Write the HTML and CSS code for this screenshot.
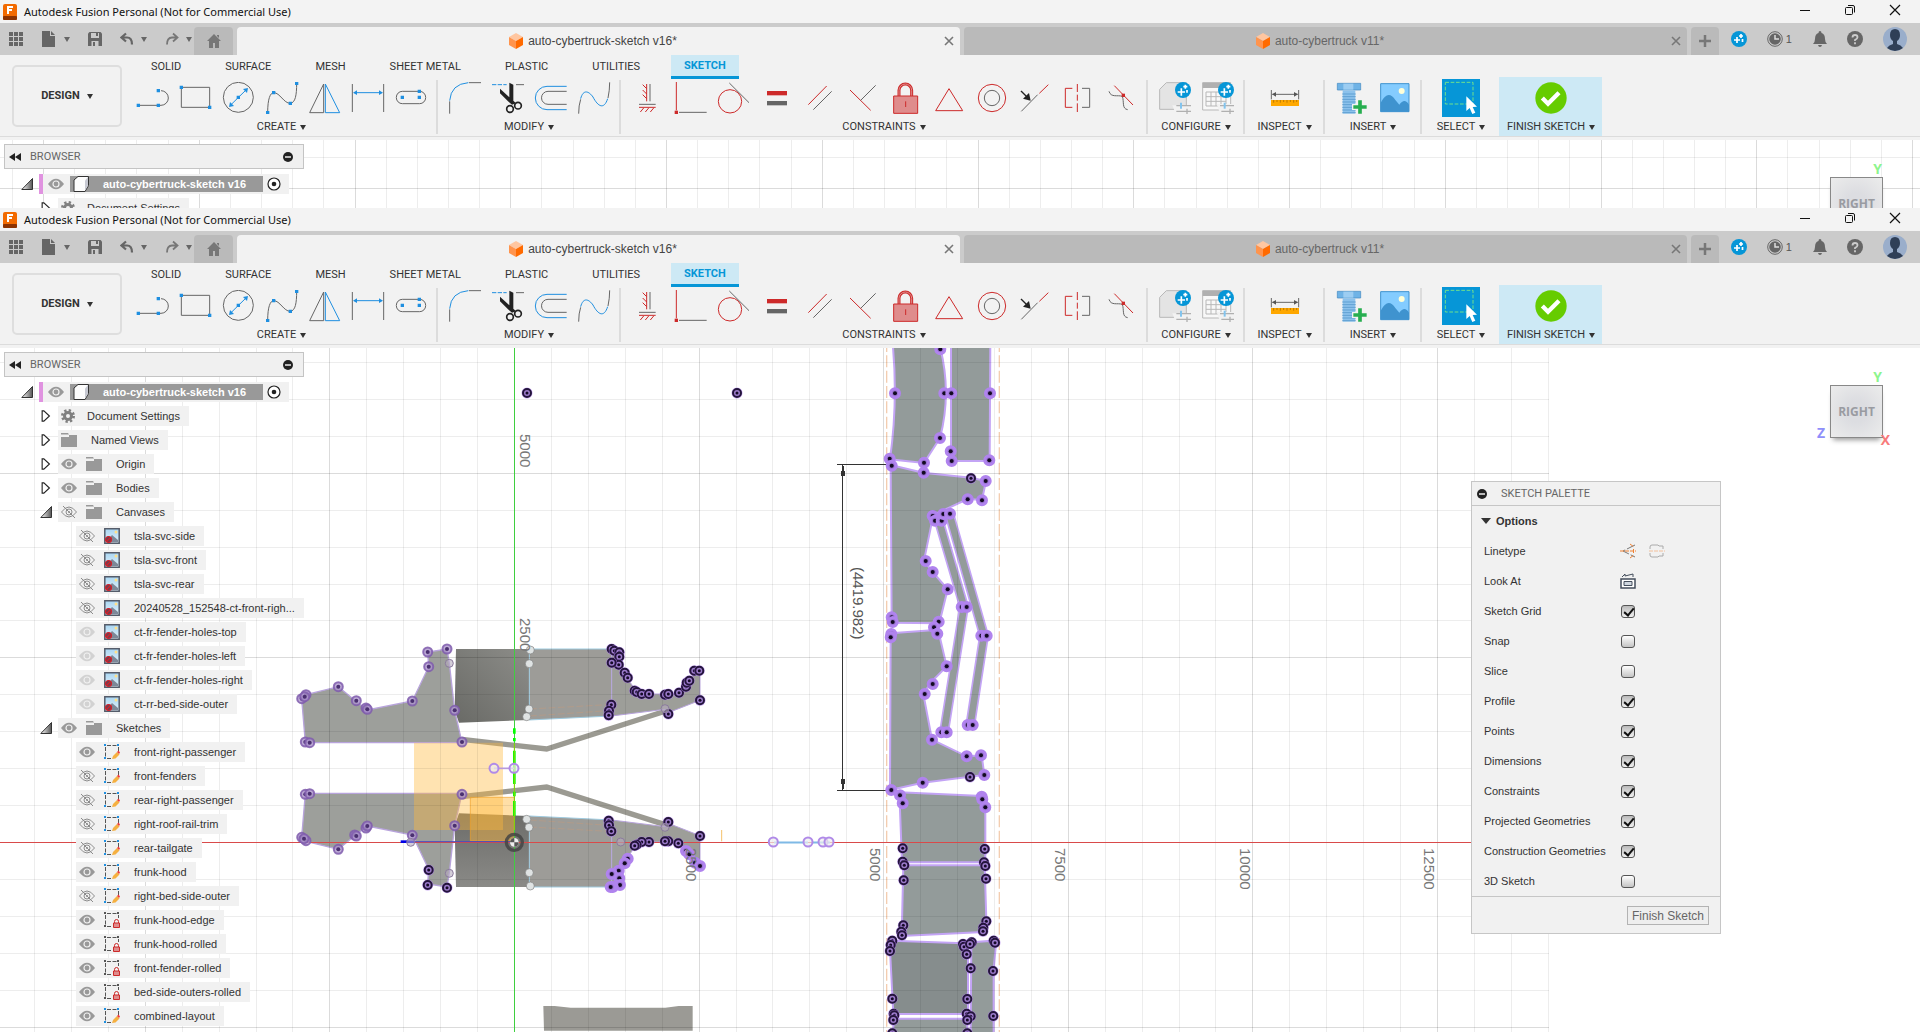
FILE: index.html
```html
<!DOCTYPE html>
<html lang="en">
<head>
<meta charset="utf-8">
<title>Autodesk Fusion Personal (Not for Commercial Use)</title>
<link rel="stylesheet" href="styles.css">
</head>
<body>
<svg class="sprite" aria-hidden="true">
  <defs>
    <linearGradient id="g-twist" x1="0" y1="0" x2="1" y2="0"><stop offset="0" stop-color="#fff"/><stop offset="1" stop-color="#555"/></linearGradient>
    <linearGradient id="g-dark" x1="1" y1="0" x2="0" y2="1"><stop offset="0" stop-color="#8d8d89"/><stop offset="1" stop-color="#696a66"/></linearGradient>
    <linearGradient id="g-dark2" x1="0" y1="0" x2="0" y2="1"><stop offset="0" stop-color="#8a8a87"/><stop offset="1" stop-color="#6c6c69"/></linearGradient>
    <linearGradient id="g-sky" x1="0" y1="0" x2="0" y2="1"><stop offset="0" stop-color="#a9d6f3"/><stop offset="1" stop-color="#e4f2fa"/></linearGradient>
  </defs>
  <symbol id="app" viewBox="0 0 14 16"><rect width="14" height="16" rx="2" fill="#f26a00"/><rect y="12" width="14" height="4" rx="1" fill="#8c3200"/><path d="M5 10V3h5M5 6h4" stroke="#fff" stroke-width="2" fill="none"/></symbol>
  <symbol id="min" viewBox="0 0 12 12"><path d="M1 6.500h10" stroke="#111"/></symbol>
  <symbol id="restore" viewBox="0 0 12 12"><path d="M1.500 4.500a1 1 0 0 1 1-1h5a1 1 0 0 1 1 1v5a1 1 0 0 1-1 1h-5a1 1 0 0 1-1-1zM4 1.500h5a1.500 1.500 0 0 1 1.500 1.500v5.500" stroke="#111" fill="none"/></symbol>
  <symbol id="close" viewBox="0 0 12 12"><path d="M1 1l10 10M11 1L1 11" stroke="#111" stroke-width="1.200"/></symbol>
  <symbol id="x" viewBox="0 0 10 10"><path d="M1 1l8 8M9 1L1 9" stroke="#777" stroke-width="1.600"/></symbol>
  <symbol id="grid" viewBox="0 0 14 14"><path d="M0 2h14M0 7h14M0 12h14" stroke="#666" stroke-width="4" stroke-dasharray="4 1"/></symbol>
  <symbol id="file" viewBox="0 0 14 16"><path d="M0 0h8v5h5v11H0zM9 0l4 4H9z" fill="#666"/></symbol>
  <symbol id="save" viewBox="0 0 14 14"><path d="M1.500 0h11L14 1.500V14H0V1.500z" fill="#666"/><path d="M3 1h8v5H3zM3.500 9h7v5h-7z" fill="#cbcbcb"/><path d="M8 1h2v3H8zM5 10h2v4H5z" fill="#666"/></symbol>
  <symbol id="undo" viewBox="0 0 14 13"><path d="M6 1L1.500 5 6 9M2 5h5q5 0 5 7" fill="none" stroke="#666" stroke-width="2.200"/></symbol>
  <symbol id="redo" viewBox="0 0 14 13"><path d="M8 1l4.500 4L8 9M12 5H7q-5 0-5 7" fill="none" stroke="#777" stroke-width="1.800"/></symbol>
  <symbol id="home" viewBox="0 0 14 14"><path d="M7 0l7 7h-2v7H8V9H6v5H2V7H0zM10 1h2v3l-2-2z" fill="#777"/></symbol>
  <symbol id="cube" viewBox="0 0 14 16"><path d="M7 0l7 4-7 4-7-4z" fill="#ffc6a0"/><path d="M0 4l7 4v8l-7-4z" fill="#ff944d"/><path d="M14 4L7 8v8l7-4z" fill="#ff6a00"/></symbol>
  <symbol id="plus" viewBox="0 0 14 14"><path d="M7 1v12M1 7h12" stroke="#777" stroke-width="2.500"/></symbol>
  <symbol id="spark" viewBox="0 0 16 16"><circle cx="8" cy="8" r="8" fill="#0696d7"/><path d="M6 6v6M3 9h6M10 3v4M8 5h4M11.500 8v3" stroke="#fff" stroke-width="1.700"/></symbol>
  <symbol id="clock" viewBox="0 0 16 16"><circle cx="8" cy="8" r="7.300" fill="none" stroke="#666"/><circle cx="8" cy="8" r="5.800" fill="#666"/><path d="M8 4v4h4" stroke="#ddd" stroke-width="1.500" fill="none"/></symbol>
  <symbol id="bell" viewBox="0 0 14 16"><path d="M7 0q1.500 0 1.500 2Q12 3 12 8q0 3 2 5H0q2-2 2-5 0-5 3.500-6Q5.500 0 7 0zM5 14h4q-.5 2-2 2t-2-2z" fill="#666"/></symbol>
  <symbol id="help" viewBox="0 0 16 16"><circle cx="8" cy="8" r="8" fill="#666"/><path d="M5.500 6.500Q5.500 4 8 4t2.500 2.200Q10.500 7.500 8 9v1M8 11.200v2" stroke="#ccc" stroke-width="1.800" fill="none"/></symbol>
  <symbol id="avatar" viewBox="0 0 24 24"><circle cx="12" cy="12" r="12" fill="#9aaecb"/><path d="M4 21q2-3 6-4v-3Q7 12 7 8q0-6 5-6t5 6q0 4-3 6v3q4 1 6 4-8 6-16 0z" fill="#2f3f57"/></symbol>

  <symbol id="line" viewBox="0 0 120 96"><path class="k" d="M16 70h60M84 26a22 22 0 0 1 0 44h-8"/><path class="bf" d="M11 65h10v10H11zM71 65h10v10H71zM71 21h10v10H71z"/></symbol>
  <symbol id="rect" viewBox="0 0 120 96"><path class="k" d="M16 16h85v60H16z"/><path class="bf" d="M11 11h10v10H11zM96 71h10v10H96z"/></symbol>
  <symbol id="circle" viewBox="0 0 120 96"><circle class="k" cx="58" cy="46" r="45"/><path class="b" d="M34 70l49-48"/><path class="bf" d="M53 41h10v10H53zM30 75l3-15 12 12zM87 18l-3 15-12-12z"/></symbol>
  <symbol id="spline" viewBox="0 0 120 96"><path class="k" d="M17 92C17 50 25 32 35 32C54 32 65 64 85 64C100 62 104 40 104 4"/><path class="bf" d="M12 87h10v9H12zM30 27h10v10H30zM80 59h10v10H80zM99 0h10v9H99z"/></symbol>
  <symbol id="mirror" viewBox="0 0 120 96"><path class="k" d="M14 92L56 6v86z"/><path class="b" d="M61 6l43 86H61z"/></symbol>
  <symbol id="dim" viewBox="0 0 120 96"><path class="k" d="M13 6v84M107 6v84"/><path class="b" d="M20 32h80"/><path class="bf" d="M15 32l12-7v14zM105 32l-12-7v14z"/></symbol>
  <symbol id="slot" viewBox="0 0 120 96"><rect class="k" x="16" y="28" width="88" height="37" rx="18"/><path class="bf" d="M29 41h10v10H29zM80 23h10v10H80zM80 41h10v10H80z"/></symbol>
  <symbol id="fillet" viewBox="0 0 120 96"><path class="k" d="M14 58v37M72 2h36"/><path class="b" d="M14 56Q18 6 70 2"/></symbol>
  <symbol id="trim" viewBox="0 0 120 96"><path class="b" stroke-dasharray="13 4" d="M12 8h44"/><path class="k" d="M84 8h24"/><path fill="#222" d="M36 20l28 26V2l12 6v48l8 8-12 4L60 58 36 34z"/><circle cx="66" cy="81" r="10" fill="none" stroke="#222" stroke-width="5"/><circle cx="90" cy="71" r="10" fill="none" stroke="#222" stroke-width="5"/></symbol>
  <symbol id="offset" viewBox="0 0 120 96"><path class="b" d="M107 13H48a35 35 0 0 0 0 70h59"/><path class="k" d="M107 28H51a19 19 0 0 0 0 39h56"/></symbol>
  <symbol id="blend" viewBox="0 0 120 96"><path class="k" d="M14 95Q14 70 20 52M102 48Q107 25 107 1"/><path class="b" d="M20 50C28 20 45 28 57 45C72 74 90 84 101 50"/></symbol>
  <symbol id="hv" viewBox="0 0 120 96"><path class="r" d="M56 6v52M56 20L44 8M56 36L44 24M56 50L44 38M33 76h50M37 90l10-12M52 90l10-12M67 90l10-12"/><path class="k" d="M66 6v52M33 67h50"/></symbol>
  <symbol id="coin" viewBox="0 0 120 96"><path class="r" d="M16 0v85"/><path class="k" d="M24 91h83"/><path class="rf" d="M11 86h10v10H11z"/></symbol>
  <symbol id="tangent" viewBox="0 0 120 96"><circle class="r" cx="48" cy="58" r="35"/><path class="k" d="M46 3l59 59"/></symbol>
  <symbol id="equal" viewBox="0 0 120 96"><path class="rf" d="M30 27h60v13H30z"/><path fill="#666" d="M30 57h60v13H30z"/></symbol>
  <symbol id="parallel" viewBox="0 0 120 96"><path class="r" d="M25 68l55-56"/><path class="k" d="M40 83l55-55"/></symbol>
  <symbol id="perp" viewBox="0 0 120 96"><path class="r" d="M21 24l62 61"/><path class="k" d="M53 55l45-45"/></symbol>
  <symbol id="lock" viewBox="0 0 120 96"><path d="M39 42V25a19 19 0 0 1 38 0v17" fill="none" stroke="#cd2a2a" stroke-width="9"/><path d="M39 42V25a19 19 0 0 1 38 0v17" fill="none" stroke="#df8c8c" stroke-width="3"/><path fill="#df8c8c" stroke="#cd2a2a" stroke-width="3" d="M23 42h72v52H23z"/><path class="r" d="M59 58v17"/></symbol>
  <symbol id="fix" viewBox="0 0 120 96"><path class="r" d="M60 20L20 86h81z"/></symbol>
  <symbol id="conc" viewBox="0 0 120 96"><circle class="r" cx="60" cy="48" r="41"/><circle class="k" cx="60" cy="48" r="23"/></symbol>
  <symbol id="midp" viewBox="0 0 120 96"><path class="k" d="M19 88l49-50"/><path class="r" d="M73 34l27-26"/><path d="M18 27l22 22" stroke="#222" stroke-width="4"/><path fill="#222" d="M47 56L24 50l18-17z"/></symbol>
  <symbol id="symm" viewBox="0 0 120 96"><path class="r" d="M43 19H22v57h21M58 6v24M58 38v18M58 64v26"/><path class="k" d="M72 19h23v57H72"/></symbol>
  <symbol id="curv" viewBox="0 0 120 96"><path class="k" d="M24 28C30 48 50 38 64 43C70 60 62 80 80 83"/><path class="r" d="M40 11l56 58"/><path class="rf" d="M62 35h10v10H62z"/></symbol>
  <symbol id="cfgbox" viewBox="0 0 120 96"><path fill="#e4e4e4" stroke="#b8b8b8" stroke-width="3" d="M14 82V22L34 2h60v80z"/><path d="M52 70h60v20H60z" fill="#f2f2f2"/><path stroke="#b0b0b0" stroke-width="4" d="M64 71h44M64 88h44M96 80v16"/><path stroke="#82c4ee" stroke-width="6" d="M78 62v18"/><circle cx="84" cy="24" r="24" fill="#0696d7"/><path stroke="#fff" stroke-width="5" d="M79 19v22M68 30h22M91 8v12M85 14h12M96 24v8"/></symbol>
  <symbol id="cfgtab" viewBox="0 0 120 96"><path fill="#f8f8f8" stroke="#b8b8b8" stroke-width="3" d="M14 2h84v82H14z"/><path fill="#b0b0b0" d="M14 2h84v16H14z"/><path stroke="#b8b8b8" stroke-width="3" fill="none" d="M24 30h60v42H24zM24 44h60M24 58h60M39 30v42M54 30v42M69 30v42"/><path d="M56 66h56v28H66z" fill="#f2f2f2"/><path stroke="#b0b0b0" stroke-width="4" d="M66 71h42M70 88h38M96 80v16"/><path stroke="#82c4ee" stroke-width="6" d="M80 62v18"/><circle cx="84" cy="24" r="24" fill="#0696d7"/><path stroke="#fff" stroke-width="5" d="M79 19v22M68 30h22M91 8v12M85 14h12M96 24v8"/></symbol>
  <symbol id="measure" viewBox="0 0 120 96"><path class="k" d="M19 24v28M101 24v28M22 37h76"/><path fill="#555" d="M21 37l12-7v14zM99 37l-12-7v14z"/><path fill="#ffa800" d="M18 54h84v18H18z"/><path stroke="#9a6200" stroke-width="2" d="M26 54v8M36 54v6M46 54v8M56 54v6M66 54v8M76 54v6M86 54v8M95 54v6"/></symbol>
  <symbol id="bolt" viewBox="0 0 120 96"><path fill="#6fb3e6" stroke="#3f86bf" stroke-width="2" d="M16 4h70v20H16z"/><path fill="#9ccdf2" d="M34 5h30v18H34z"/><path fill="#8cc2ec" d="M32 25h38v70H32z"/><path stroke="#5f9fd2" stroke-width="3" d="M31 36h40M31 44h40M31 52h40M31 60h40M31 68h40M31 76h40M31 84h40M31 92h40"/><path stroke="#f2f2f2" stroke-width="18" d="M84 52v44M60 75h48"/><path stroke="#27ae50" stroke-width="11" d="M84 55v40M64 75h40"/></symbol>
  <symbol id="image" viewBox="0 0 120 96"><path fill="#84ccff" stroke="#3f93cf" stroke-width="3" d="M17 5h85v84H17z"/><path fill="#3f93cf" d="M17 62q22-42 44-8l12 14q16-22 29 0v21H17z"/><circle cx="80" cy="27" r="9" fill="#ffffd8"/></symbol>
  <symbol id="select" viewBox="0 0 114 114"><path fill="#0696d7" d="M0 0h114v114H0z"/><path fill="none" stroke="#6fe08c" stroke-width="3" stroke-dasharray="11 5" d="M10 10h83v65H10z"/><path fill="#fff" d="M73 52v44l10-9 8 18 9-4-8-17 13-1z"/></symbol>
  <symbol id="check" viewBox="0 0 96 96"><circle cx="48" cy="48" r="47" fill="#66cc00"/><path d="M22 48l17 17 33-33" fill="none" stroke="#fff" stroke-width="13"/></symbol>

  <symbol id="rew" viewBox="0 0 12 8"><path d="M0 4l6-4v8zM6 4l6-4v8z" fill="#222"/></symbol>
  <symbol id="minus" viewBox="0 0 10 10"><circle cx="5" cy="5" r="5" fill="#222"/><path d="M2 5h6" stroke="#eee" stroke-width="1.500"/></symbol>
  <symbol id="open" viewBox="0 0 12 12"><path d="M11.500 .5v11H.8z" fill="url(#g-twist)" stroke="#333"/></symbol>
  <symbol id="shut" viewBox="0 0 12 14"><path d="M1.500 1h2L10 7l-6.500 6h-2z" fill="#fff" stroke="#222" stroke-width="1.300"/></symbol>
  <symbol id="eye" viewBox="0 0 16 12"><path d="M0 6Q8-4.500 16 6 8 16.500 0 6z" fill="#999"/><circle cx="8" cy="6" r="3" fill="#999" stroke="#f0f0f0" stroke-width="1.200"/></symbol>
  <symbol id="noeye" viewBox="0 0 16 14"><path d="M.5 7Q8-3 15.500 7 8 17 .5 7zM2 1l12 12" fill="none" stroke="#8c8c8c"/><circle cx="8" cy="7" r="3" fill="none" stroke="#8c8c8c"/><circle cx="8" cy="7" r="1" fill="#8c8c8c"/></symbol>
  <symbol id="box" viewBox="0 0 16 16"><path d="M1 4l4-3.500h10.500v9L12 15.500H1z" fill="#fdfdfd" stroke="#333"/><path d="M12 4.500L15 1v8.500l-3 5z" fill="#c7c9d2"/></symbol>
  <symbol id="target" viewBox="0 0 14 14"><circle cx="7" cy="7" r="6" fill="#fff" stroke="#222" stroke-width="1.200"/><circle cx="7" cy="7" r="2.300" fill="#222"/></symbol>
  <symbol id="gear" viewBox="0 0 14 14"><circle cx="7" cy="7" r="5.500" fill="none" stroke="#808080" stroke-width="3" stroke-dasharray="2.200 2.120"/><circle cx="7" cy="7" r="3.500" fill="none" stroke="#808080" stroke-width="3"/></symbol>
  <symbol id="folder" viewBox="0 0 16 14"><path d="M0 4h8V2h8v12H0zM0 0h7l1 1.500H0z" fill="#999"/></symbol>
  <symbol id="canvas" viewBox="0 0 16 16"><path d="M.8.800h14.400v14.400H.8z" fill="url(#g-sky)" stroke="#555c6a" stroke-width="1.500"/><path d="M2 14l6-7 6 5v2z" fill="#7e8898"/><circle cx="12" cy="4" r="1.500" fill="#ffe08a"/><circle cx="4.500" cy="11.500" r="3" fill="#6d4150" stroke="#d3202b" stroke-width="1.200"/><path d="M2.500 13.500l4-4" stroke="#d3202b" stroke-width="1.200"/></symbol>
  <symbol id="sketch" viewBox="0 0 16 16"><path d="M3 1.500h10M1.500 3v10M3 14.500h5M14.500 3v4" stroke="#555" stroke-dasharray="4 1.500"/><path fill="#1f8fe0" d="M0 0h2v2H0zM13 0h2v2h-2zM0 13h2v2H0z"/><path d="M8 15l1-3 4-4 2.500 2.500-4 4z" fill="#f5b041"/><path d="M13 8l1.500-1.500L16 8.500l-1 1.500z" fill="#ee3b3b"/></symbol>
  <symbol id="sklock" viewBox="0 0 16 16"><path d="M3 1.500h10M1.500 3v10M3 14.500h5M14.500 3v3" stroke="#555" stroke-dasharray="4 1.500"/><path fill="#555" d="M0 0h2v2H0zM13 0h2v2h-2zM0 13h2v2H0z"/><path d="M9.500 11h6v4.500h-6z" fill="#df8c8c" stroke="#cd2a2a"/><path d="M10.500 11V9.500a2 2 0 0 1 4 0V11" fill="none" stroke="#cd2a2a"/></symbol>
  <symbol id="lt1" viewBox="0 0 16 14"><path d="M15 1L3 7l12 6" fill="none" stroke="#777" stroke-dasharray="9 2"/><path d="M0 7h16M13.500 5v4M10 0l4 3M10 14l4-3" stroke="#f08030" stroke-dasharray="4 1"/></symbol>
  <symbol id="lt2" viewBox="0 0 16 14"><path d="M1 5V3q0-2 2-2h6l1 1h4v3M1 9v2q0 2 2 2h6l1-1h4V9" fill="none" stroke="#aaa"/><path d="M0 7h16" stroke="#f3c09b" stroke-dasharray="4 1"/></symbol>
  <symbol id="look" viewBox="0 0 16 16"><path d="M1 6h14v9H1z" fill="#fff" stroke="#444e5c" stroke-width="1.500"/><path d="M4 8.500h8v4H4z" fill="#cfd6df" stroke="#444e5c"/><path d="M2 4l3-3v2l4-1 4-1v3" fill="none" stroke="#444e5c"/></symbol>
</svg>

<template id="chrome">
  <header class="titlebar">
    <svg class="appicon"><use href="#app"/></svg>
    <span class="title">Autodesk Fusion Personal (Not for Commercial Use)</span>
    <div class="winbtns">
      <button aria-label="Minimize"><svg><use href="#min"/></svg></button>
      <button aria-label="Restore"><svg><use href="#restore"/></svg></button>
      <button aria-label="Close"><svg><use href="#close"/></svg></button>
    </div>
  </header>
  <div class="tabstrip">
    <div class="quick">
      <button aria-label="Data panel"><svg class="s14"><use href="#grid"/></svg></button>
      <button class="drop" aria-label="File"><svg class="s16"><use href="#file"/></svg><i class="caret"></i></button>
      <button aria-label="Save"><svg class="s14"><use href="#save"/></svg></button>
      <button class="drop" aria-label="Undo"><svg class="s14"><use href="#undo"/></svg><i class="caret"></i></button>
      <button class="drop" aria-label="Redo"><svg class="s14"><use href="#redo"/></svg><i class="caret"></i></button>
    </div>
    <button class="hometab" aria-label="Home"><svg class="s14"><use href="#home"/></svg></button>
    <div class="doctab on"><svg class="s16"><use href="#cube"/></svg><span>auto-cybertruck-sketch v16*</span><button class="tabx" aria-label="Close tab"><svg><use href="#x"/></svg></button></div>
    <div class="doctab"><svg class="s16"><use href="#cube"/></svg><span>auto-cybertruck v11*</span><button class="tabx" aria-label="Close tab"><svg><use href="#x"/></svg></button></div>
    <button class="addtab" aria-label="New tab"><svg class="s14"><use href="#plus"/></svg></button>
    <div class="status">
      <button aria-label="Assistant"><svg class="s16"><use href="#spark"/></svg></button>
      <button class="jobs"><svg class="s16"><use href="#clock"/></svg>1</button>
      <button aria-label="Notifications"><svg class="s16"><use href="#bell"/></svg></button>
      <button aria-label="Help"><svg class="s16"><use href="#help"/></svg></button>
      <button aria-label="Account"><svg class="s24"><use href="#avatar"/></svg></button>
    </div>
  </div>
  <div class="ribbon">
    <button class="design">DESIGN<i class="caret"></i></button>
    <div class="ribbonbody">
      <nav class="modes">
        <button>SOLID</button><button>SURFACE</button><button>MESH</button><button>SHEET METAL</button><button>PLASTIC</button><button>UTILITIES</button><button class="on">SKETCH</button>
      </nav>
      <div class="groups"></div>
    </div>
  </div>
</template>

<section class="window short" data-chrome>
  <main class="workspace"><svg class="scene"><g class="gridlines"></g></svg>
    <div class="browser">
      <div class="browserhead"><svg class="rew"><use href="#rew"/></svg><span>BROWSER</span><svg class="s10"><use href="#minus"/></svg></div>
      <ul class="tree"></ul>
    </div>
    <div class="viewcube"><b class="ay">Y</b><b class="face">RIGHT</b></div>
  </main>
</section>

<section class="window full" data-chrome>
  <main class="workspace">
    <svg class="scene">
      <g transform="translate(0 -348)">
        <g transform="translate(280 620) scale(.33333)">
          <path class="body" d="M790 1158h34l48 5h284l40-5h42v74H792z"/>
          <g id="car"></g>
          <path d="M402 368h267v262H402z" fill="#ffb93c" fill-opacity=".4"/>
          <path d="M571 532h132v130H571z" fill="#ffb93c" fill-opacity=".45" stroke="#f0a32a" stroke-width="2"/>
          <path d="M1325 630v34" stroke="#f5c16a" stroke-width="3"/>
        </g>
        <g transform="translate(780 340) scale(.33333)">
          <g class="sheet">
            <path d="M337 0Q355 180 330 358L432 369 480 294Q515 160 481 24V0z"/>
            <path d="M513 0V363H629L631 0z"/>
            <path d="M332 375L430 398 573 413 618 423 606 480 563 477 460 525 432 662 458 696 503 748 478 850 335 848z"/>
            <path d="M332 880L465 870 478 885 500 979 455 1025 430 1062 456 1199 560 1249 605 1246 613 1305 428 1328 330 1350z"/>
            <path d="M358 1357L606 1368 616 1400V1567H366z"/>
            <path d="M370 1576H614L619 1740 610 1776 365 1788z"/>
            <path fill="#868d8d" d="M335 1802L550 1810 564 1840V2022H340L330 1830z"/>
            <path d="M574 1807L642 1802 648 1810 641 1890V2090H572z"/>
            <path d="M340 2036H562V2090H340z"/>
          </g>
          <g fill="none" stroke-linejoin="round"><path d="M476 540L552 800 492 1177M508 522L612 887 571 1155" stroke="#c3a4f5" stroke-width="30"/><path d="M476 540L552 800 492 1177M508 522L612 887 571 1155" stroke="#939b9a" stroke-width="20"/></g>
          <path d="M320 0V2090M658 0V2090" stroke="#f3cdb0" stroke-width="4" stroke-dasharray="36 10"/>
        </g>
      </g>
      <g class="gridlines"></g>
      <g transform="translate(0 -348)">
        <path d="M0 842.500H1548" stroke="#d94a4a"/>
        <path d="M514.500 348V1032" stroke="#3fcf3f"/>
        <g transform="translate(280 620) scale(.33333)">
          <path d="M362 665h41" stroke="#0000e6" stroke-width="8"/><path d="M403 665h300" stroke="#4a4ac0" stroke-width="3"/>
          <path d="M703 325v16M703 354v10M703 392v100M703 515v14M703 543v45" stroke="#00ff00" stroke-width="8"/><path d="M703 370v260" stroke="#8fd400" stroke-width="3"/>
          <path d="M642 445h60" stroke="#b79add" stroke-width="5"/>
          <circle cx="703" cy="667" r="24" fill="none" stroke="#444" stroke-width="10" stroke-opacity=".85"/>
          <circle cx="703" cy="667" r="13" fill="#eee"/><path d="M703 654v13h13a13 13 0 0 1-13 13v-13h-13a13 13 0 0 1 13-13" fill="#555"/>
        </g>
        <path d="M842.500 464v326M837 464.500h51M837 790.500h51" stroke="#333" fill="none"/><path d="M841 471h4v5h-4zM841 779h4v5h-4zM842 466h2v8h-2zM842 781h2v8h-2z" fill="#333"/>
        <path d="M774 842.500h34M812 842.500h18" stroke="#7fb9e6" stroke-width="2"/>
        <g id="points"></g>
        <g class="scale">
          <text transform="translate(520 434) rotate(90)">5000</text><text transform="translate(520 618) rotate(90)">2500</text>
          <text transform="translate(686 848) rotate(90)">2500</text><text transform="translate(870 848) rotate(90)">5000</text>
          <text transform="translate(1055 848) rotate(90)">7500</text><text transform="translate(1240 848) rotate(90)">10000</text><text transform="translate(1424 848) rotate(90)">12500</text>
          <text class="dimtext" transform="translate(853 567) rotate(90)">(4419.982)</text>
        </g>
      </g>
    </svg>
    <div class="browser">
      <div class="browserhead"><svg class="rew"><use href="#rew"/></svg><span>BROWSER</span><svg class="s10"><use href="#minus"/></svg></div>
      <ul class="tree"></ul>
    </div>
    <div class="viewcube"><b class="ay">Y</b><b class="face">RIGHT</b><b class="az">Z</b><b class="ax">X</b></div>
    <aside class="palette">
      <h2><svg class="s10"><use href="#minus"/></svg>SKETCH PALETTE</h2>
      <h3><i class="caret"></i>Options</h3>
      <div class="opt"><span>Linetype</span><button aria-label="Construction"><svg class="s16"><use href="#lt1"/></svg></button><button aria-label="Centerline"><svg class="s16"><use href="#lt2"/></svg></button></div>
      <div class="opt"><span>Look At</span><button aria-label="Look At"><svg class="s16"><use href="#look"/></svg></button></div>
      <label class="opt"><span>Sketch Grid</span><input type="checkbox" checked></label>
      <label class="opt"><span>Snap</span><input type="checkbox"></label>
      <label class="opt"><span>Slice</span><input type="checkbox"></label>
      <label class="opt"><span>Profile</span><input type="checkbox" checked></label>
      <label class="opt"><span>Points</span><input type="checkbox" checked></label>
      <label class="opt"><span>Dimensions</span><input type="checkbox" checked></label>
      <label class="opt"><span>Constraints</span><input type="checkbox" checked></label>
      <label class="opt"><span>Projected Geometries</span><input type="checkbox" checked></label>
      <label class="opt"><span>Construction Geometries</span><input type="checkbox" checked></label>
      <label class="opt"><span>3D Sketch</span><input type="checkbox"></label>
      <footer><button class="finish">Finish Sketch</button></footer>
    </aside>
  </main>
</section>
<script src="app.js"></script>
</body>
</html>
```
FILE: styles.css
```css
* { box-sizing: border-box; }
body { margin: 0; height: 100vh; display: flex; flex-direction: column; overflow: hidden; background: #fff; color: #333; font: 11px/16px "Liberation Sans", Arial, sans-serif; }
button { border: 0; margin: 0; padding: 0; background: none; font: inherit; color: inherit; display: inline-flex; align-items: center; justify-content: center; }
svg { display: block; flex: none; }
.sprite { position: absolute; width: 0; height: 0; }
.s10 { width: 10px; height: 10px; }
.s14 { width: 14px; height: 14px; }
.s16 { width: 16px; height: 16px; }
.s24 { width: 24px; height: 24px; }
.k { fill: none; stroke: #666; stroke-width: 3px; }
.b { fill: none; stroke: #1f8fe0; stroke-width: 3px; }
.r { fill: none; stroke: #cd2a2a; stroke-width: 3px; }
.bf { fill: #1f8fe0; }
.rf { fill: #cd2a2a; }
.caret { width: 0; height: 0; border: 3px solid transparent; border-top: 5px solid #333; border-bottom: 0; }

.window { display: flex; flex-direction: column; overflow: hidden; }
.short { flex: none; }
.short .workspace { flex: none; height: 68px; }
.full { flex: 1; min-height: 0; }
.full .workspace { flex: 1; min-height: 0; }

.titlebar { height: 23px; flex: none; display: flex; align-items: center; padding: 0 3px; gap: 7px; background: #f3f3f3; color: #111; font-family: "Noto Sans", sans-serif; }
.appicon { width: 14px; height: 16px; }
.title { flex: 1; }
.winbtns { display: flex; padding-bottom: 3px; }
.winbtns button { width: 45px; height: 20px; }
.winbtns svg { width: 12px; height: 12px; }

.tabstrip { height: 32px; flex: none; display: flex; align-items: flex-end; gap: 4px; background: #cbcbcb; }
.quick { width: 190px; height: 32px; display: flex; align-items: center; padding-left: 9px; gap: 18px; }
.quick .drop { gap: 7px; }
.quick .caret { border-top-color: #666; }
.hometab, .doctab, .addtab { height: 28px; background: #bababa; border-radius: 4px 4px 0 0; }
.hometab { width: 39px; }
.doctab { flex: 1; display: flex; align-items: center; justify-content: center; gap: 4px; padding-left: 14px; font-size: 12px; color: #666; }
.doctab span { flex: none; }
.doctab svg { margin-left: auto; }
.doctab.on { background: #f2f2f2; color: #444; }
.doctab .tabx { width: 22px; height: 28px; margin-left: auto; }
.tabx svg { width: 10px; height: 10px; margin: 0; }
.addtab { width: 28px; }
.status { width: 197px; height: 32px; display: flex; align-items: center; justify-content: space-between; padding: 0 13px 0 8px; color: #555; }
.jobs { gap: 3px; }

.ribbon { flex: none; height: 85px; display: flex; background: #f2f2f2; box-shadow: inset 0 -3px #f2f2f2, inset 0 -4px #dcdcdc; font-family: Roboto, sans-serif; color: #333; }
.design { width: 110px; height: 62px; margin: 10px 4px 0 12px; border: 2px solid #dedede; border-radius: 5px; gap: 7px; font-weight: 700; }
.ribbonbody { flex: 1; min-width: 0; }
.modes { display: flex; gap: 18px; height: 24px; padding-left: 12px; }
.modes button { padding: 0 13px; height: 24px; }
.modes .on { background: #cde9f5; color: #0696d7; font-weight: 700; border-bottom: 3px solid #0696d7; }
.groups { display: flex; height: 57px; }
.group { position: relative; display: flex; flex-direction: column; align-items: center; padding: 2px 4px 0 5px; border-right: 2px solid #dcdcdc; border-image: linear-gradient(#f2f2f2 2px, #dcdcdc 2px, #dcdcdc 54px, #f2f2f2 54px) 1; }
.group div { display: flex; height: 34px; align-items: center; }
.group svg { width: 40px; height: 32px; }
.group button { width: 43px; }
.group .label { width: auto; gap: 4px; height: 16px; margin-top: 4px; white-space: nowrap; }
.inspect { width: 80px; }
.insert { width: 97px; }
.select { width: 77px; border: 0; }
.select div svg { width: 38px; height: 38px; }
.done { width: 103px; height: 59px; margin-top: -2px; padding-top: 4px; background: #cde9f5; border: 0; }

.workspace { position: relative; overflow: hidden; background: #fff; }
.scene { position: absolute; inset: 0; width: 100%; height: 100%; }
.scale text { font: 15px "Liberation Sans", Arial, sans-serif; fill: #777; }
.scale .dimtext { fill: #555; }
.body { fill: #9b9a95; }
.sheet { fill: #939b9a; stroke: #c3a4f5; stroke-width: 6px; }

.browser { position: relative; width: 300px; margin: 4px 0 0 4px; }
.browserhead { height: 25px; display: flex; align-items: center; gap: 9px; padding: 0 10px 0 4px; background: #f0f0f0; border: 1px solid #c4c4c4; color: #666; font-family: Roboto, sans-serif; }
.browserhead span { flex: 1; }
.rew { width: 12px; height: 8px; }
.tree { list-style: none; margin: 0; padding: 5px 0 0; display: flex; flex-direction: column; gap: 4px; }
.tree li { display: flex; align-items: center; height: 20px; }
.tree .tw { width: 12px; height: 12px; margin-right: 6px; }
.tree .item { display: flex; align-items: center; height: 20px; padding: 0 9px 0 3px; background: #f1f1f1; white-space: nowrap; }
.l0 { padding-left: 17px; }
.l1 { padding-left: 36px; }
.l2 { padding-left: 72px; }
.ico { width: 16px; height: 16px; }
.eye { width: 16px; height: 14px; margin-right: 9px; }
.dim { opacity: .35; }
.l1 .ico, .l2 .ico { margin-right: 14px; }
.item .geari { width: 14px; height: 14px; margin-right: 12px; }
.tree .root { margin: 0; padding: 0 8px 0 5px; border-left: 4px solid #e093e0; gap: 4px; }
.root .eye { margin-right: 2px; }
.name { display: flex; align-items: center; gap: 14px; height: 16px; padding: 0 17px 0 3px; background: #999; color: #fff; font-weight: 700; }

.viewcube { position: absolute; right: 37px; top: 37px; width: 53px; height: 53px; display: flex; align-items: center; justify-content: center; background: radial-gradient(#dcdde1 30%, #ececec); border: 1px solid #888; box-shadow: 0 5px 5px -3px #999; font: 14px/16px "Open Sans", sans-serif; }
.viewcube b { font-weight: 700; }
.face { font-size: 12px; color: #999ba1; }
.ay, .az, .ax { position: absolute; }
.ay { top: -17px; right: 0; color: #8df58d; }
.az { bottom: -4px; left: -14px; color: #8f8ffa; }
.ax { bottom: -11px; right: -8px; color: #f87a7a; }

.palette { position: absolute; right: 199px; top: 133px; width: 250px; background: #f1f1f1; border: 1px solid #c6c6c6; }
.palette h2 { display: flex; align-items: center; gap: 14px; height: 24px; margin: 0; padding-left: 5px; border-bottom: 1px solid #c6c6c6; font: 11px/16px Roboto, sans-serif; color: #666; }
.palette h3 { display: flex; align-items: center; gap: 5px; height: 30px; margin: 0; padding-left: 9px; font-size: 11px; }
.palette h3 .caret { border-width: 6px 5px 0; }
.opt { display: flex; align-items: center; height: 30px; padding-left: 12px; }
.opt span { width: 136px; }
.opt button { margin-right: 13px; }
.opt input { appearance: none; position: relative; width: 14px; height: 13px; margin: 0 1px; border: 1px solid #555; border-radius: 3px; background: linear-gradient(#fff, #c4c4c4); }
.opt input:checked { background: linear-gradient(#bbb, #f0f0f0); }
.opt input:checked::before { content: ""; position: absolute; left: 4px; top: 0; width: 4px; height: 8px; border: solid #111; border-width: 0 2px 2px 0; transform: rotate(40deg); }
.palette footer { display: flex; justify-content: flex-end; padding: 9px 11px 8px; border-top: 1px solid #c6c6c6; }
.finish { height: 19px; padding: 0 4px; border: 1px solid #b3b3b3; background: #eee; color: #666; font-size: 12px; }
```
FILE: app.js
```js
const icon = (id, cls = '') => `<svg class="${cls}"><use href="#${id}"/></svg>`;

const groups = [
  ['CREATE', '', 'line rect circle spline mirror dim slot'],
  ['MODIFY', '', 'fillet trim offset blend'],
  ['CONSTRAINTS', '', 'hv coin tangent equal parallel perp lock fix conc midp symm curv'],
  ['CONFIGURE', '', 'cfgbox cfgtab'],
  ['INSPECT', 'inspect', 'measure'],
  ['INSERT', 'insert', 'bolt image'],
  ['SELECT', 'select', 'select'],
  ['FINISH SKETCH', 'done', 'check']
];
const ribbon = groups.map(([name, cls, ids]) =>
  `<div class="group ${cls}"><div>${ids.split(' ').map(i => `<button aria-label="${i}">${icon(i)}</button>`).join('')}</div><button class="label">${name}<i class="caret"></i></button></div>`).join('');

for (const w of document.querySelectorAll('[data-chrome]')) {
  const chrome = document.getElementById('chrome').content.cloneNode(true);
  chrome.querySelector('.groups').innerHTML = ribbon;
  w.prepend(chrome);
}

// Browser tree: level, visibility, icon, label
const rows = [
  [1, 'shut', '', 'gear', 'Document Settings'], [1, 'shut', '', 'folder', 'Named Views'],
  [1, 'shut', 'eye', 'folder', 'Origin'], [1, 'shut', 'eye', 'folder', 'Bodies'], [1, 'open', 'noeye', 'folder', 'Canvases'],
  ...['tsla-svc-side', 'tsla-svc-front', 'tsla-svc-rear', '20240528_152548-ct-front-righ...'].map(n => [2, '', 'noeye', 'canvas', n]),
  ...['ct-fr-fender-holes-top', 'ct-fr-fender-holes-left', 'ct-fr-fender-holes-right', 'ct-rr-bed-side-outer'].map(n => [2, '', 'dim', 'canvas', n]),
  [1, 'open', 'eye', 'folder', 'Sketches'],
  [2, '', 'eye', 'sketch', 'front-right-passenger'], [2, '', 'noeye', 'sketch', 'front-fenders'],
  [2, '', 'noeye', 'sketch', 'rear-right-passenger'], [2, '', 'noeye', 'sketch', 'right-roof-rail-trim'],
  [2, '', 'noeye', 'sketch', 'rear-tailgate'], [2, '', 'eye', 'sketch', 'frunk-hood'],
  [2, '', 'noeye', 'sketch', 'right-bed-side-outer'], [2, '', 'eye', 'sklock', 'frunk-hood-edge'],
  [2, '', 'eye', 'sklock', 'frunk-hood-rolled'], [2, '', 'eye', 'sklock', 'front-fender-rolled'],
  [2, '', 'eye', 'sklock', 'bed-side-outers-rolled'], [2, '', 'eye', 'sketch', 'combined-layout']
];
const treeHtml = count => `<li class="l0">${icon('open', 'tw')}<div class="item root">${icon('eye', 'eye')}<span class="name">${icon('box', 'ico')}auto-cybertruck-sketch v16</span>${icon('target', 's14')}</div></li>` +
  rows.slice(0, count).map(([lvl, tw, vis, ic, name]) =>
    `<li class="l${lvl}">${tw ? icon(tw, 'tw') : ''}<div class="item">${vis ? icon(vis === 'dim' ? 'eye' : vis, 'eye ' + (vis === 'dim' ? 'dim' : '')) : ''}${icon(ic, ic === 'gear' ? 'geari' : 'ico')}${name}</div></li>`).join('');
const trees = document.querySelectorAll('.tree');
trees[0].innerHTML = treeHtml(1);
trees[1].innerHTML = treeHtml(rows.length);

// Grid lines
function grid(g, x0, y0, step, maxX, h) {
  let minor = '', major = '';
  for (let i = -30; i < 70; i++) {
    const x = Math.round(x0 + i * step) + 0.5;
    if (x > 0 && x <= maxX) i % 5 ? minor += `M${x} 0V${h}` : major += `M${x} 0V${h}`;
    const y = Math.round(y0 + i * step) + 0.5;
    if (y > 0 && y < h) i % 5 ? minor += `M0 ${y}H${maxX}` : major += `M0 ${y}H${maxX}`;
  }
  g.innerHTML = `<path d="${minor}" stroke="#000" stroke-opacity=".07"/><path d="${major}" stroke="#000" stroke-opacity=".14"/>`;
}
const grids = document.querySelectorAll('.gridlines');
grid(grids[0], 43, 48, 31.15, 1920, 68);
grid(grids[1], 514, 494, 36.92, 1549, 684);

// Truck body, drawn once and mirrored about its centre line
const half = dark => `
  <path d="M546 358L800 387 1155 274" fill="none" stroke="#9b9a92" stroke-width="16"/>
  <path d="M528 87H748V300L537 308 524 271z" fill="url(#${dark})"/>
  <path d="M748 87H995V288L748 300z" fill="#9d9c98" stroke="#9fcbe0" stroke-width="3"/>
  <path d="M750 267L985 254M750 288L985 272" stroke="#c49a7c" stroke-width="1.500" stroke-dasharray="20 8"/>
  <path d="M995 87L1020 100 1018 140 1040 172 1068 212 1085 222H1165L1200 218 1220 195 1245 152H1260V241L1165 278 1155 268 995 288z" fill="#9d9e99" stroke="#b8a4dc" stroke-width="3"/>
  <path d="M65 236L78 224 175 200 226 242 262 270 397 243 446 140 443 96 501 87 508 130 524 271 546 368H76z" fill="#9d9f9b" stroke="#b8a4dc" stroke-width="4"/>`;
document.getElementById('car').innerHTML = half('g-dark') + `<g transform="matrix(1 0 0 -1 0 888)">${half('g-dark2')}</g>`;

// Sketch points. Each set: style, origin x, origin y, coordinates in thirds of a pixel
const styles = {
  lilac: (x, y) => `<circle cx="${x}" cy="${y}" r="4.5" fill="#9a74d2" stroke="#b083ee" stroke-width="3"/><circle cx="${x}" cy="${y}" r="2" fill="#120a20"/>`,
  soft: (x, y) => `<circle cx="${x}" cy="${y}" r="4.5" fill="#ac95cc" fill-opacity=".8" stroke="#7f5cad" stroke-opacity=".85" stroke-width="2"/><circle cx="${x}" cy="${y}" r="2" fill="#4a3070"/>`,
  deep: (x, y) => `<circle cx="${x}" cy="${y}" r="5.500" fill="#b083ee" fill-opacity=".7"/><circle cx="${x}" cy="${y}" r="4" fill="#9c7bcb" stroke="#24143c" stroke-width="2"/><circle cx="${x}" cy="${y}" r="1.500" fill="#160a28"/>`,
  pale: (x, y) => `<circle cx="${x}" cy="${y}" r="4" fill="#dfe3e3" stroke="#777" stroke-opacity=".6"/>`,
  faint: (x, y) => `<circle cx="${x}" cy="${y}" r="4" fill="#b5abbe" fill-opacity=".6" stroke="#8b7b9d"/>`,
  ring: (x, y) => `<circle cx="${x}" cy="${y}" r="4.500" fill="#eee" fill-opacity=".7" stroke="#b08ae8" stroke-width="2"/>`
};
const sets = [
  ['soft', 280, 620, '65,236 78,224 74,230 175,200 229,242 258,264 262,268 397,243 446,140 443,96 501,87 524,271 546,366 76,366 89,368 546,523 76,523 89,521 65,652 78,662 72,656 175,688 224,645 229,648 258,624 262,618 397,646 524,617'],
  ['deep', 280, 620, '446,750 443,795 501,803 995,87 1003,92 1018,97 1018,110 1016,134 995,128 1034,158 1043,173 1064,212 1070,216 1085,222 1107,222 1155,224 1165,222 1197,218 1218,200 1220,188 1228,182 1243,152 1258,152 1260,241 1165,282 994,254 987,272 986,286 986,602 987,616 994,634 1165,606 1260,648 1195,670 1165,664 1155,664 1107,666 1085,666 1070,674 1064,677'],
  ['faint', 280, 620, '508,130 508,760 1155,266 1155,622 1022,666 392,667'],
  ['pale', 280, 620, '751,90 748,131 747,267 740,290 740,598 747,622 748,758 751,798'],
  ['ring', 280, 620, '642,445 702,445'],
  ['lilac', 280, 620, '1043,716 1034,730 1016,752 995,762 1018,775 1020,795 998,801 992,801 1218,693 1228,703 1245,728 1260,738'],
  ['lilac', 780, 340, '481,28 345,160 493,160 514,160 630,160 480,294 512,334 515,363 628,361 329,356 335,377 432,368 431,398 617,423 606,481 563,478 458,528 465,542 485,542 490,522 510,521 437,663 458,696 503,748 545,801 560,801 604,887 620,887 335,832 338,846 334,882 332,892 476,845 462,862 472,881 500,979 458,1032 434,1062 456,1199 484,1177 500,1177 563,1155 578,1155 560,1249 603,1246 613,1305 428,1328 334,1350 360,1366 368,1390 605,1370 607,1378 616,1402'],
  ['deep', 780, 340, '573,415 570,1311 368,1525 614,1527 368,1565 373,1576 612,1567 616,1578 371,1621 618,1616 370,1756 364,1775 366,1786 619,1744 610,1763 609,1774 337,1802 332,1815 330,1833 549,1812 552,1820 575,1807 570,1812 560,1843 641,1802 645,1808 572,1885 639,1893 337,1976 562,1977 341,2021 343,2026 340,2040 560,2021 572,2029 562,2040 640,2028 337,2080 562,2080'],
  ['deep', 0, 0, '1581,1179 2211,1179'],
  ['ring', 0, 0, '2320,2526 2424,2526 2469,2526 2487,2526']
];
document.getElementById('points').innerHTML = sets.map(([s, ox, oy, list]) =>
  list.split(' ').map(p => { const [x, y] = p.split(','); return styles[s]((ox + x / 3).toFixed(1), (oy + y / 3).toFixed(1)); }).join('')).join('');
```
